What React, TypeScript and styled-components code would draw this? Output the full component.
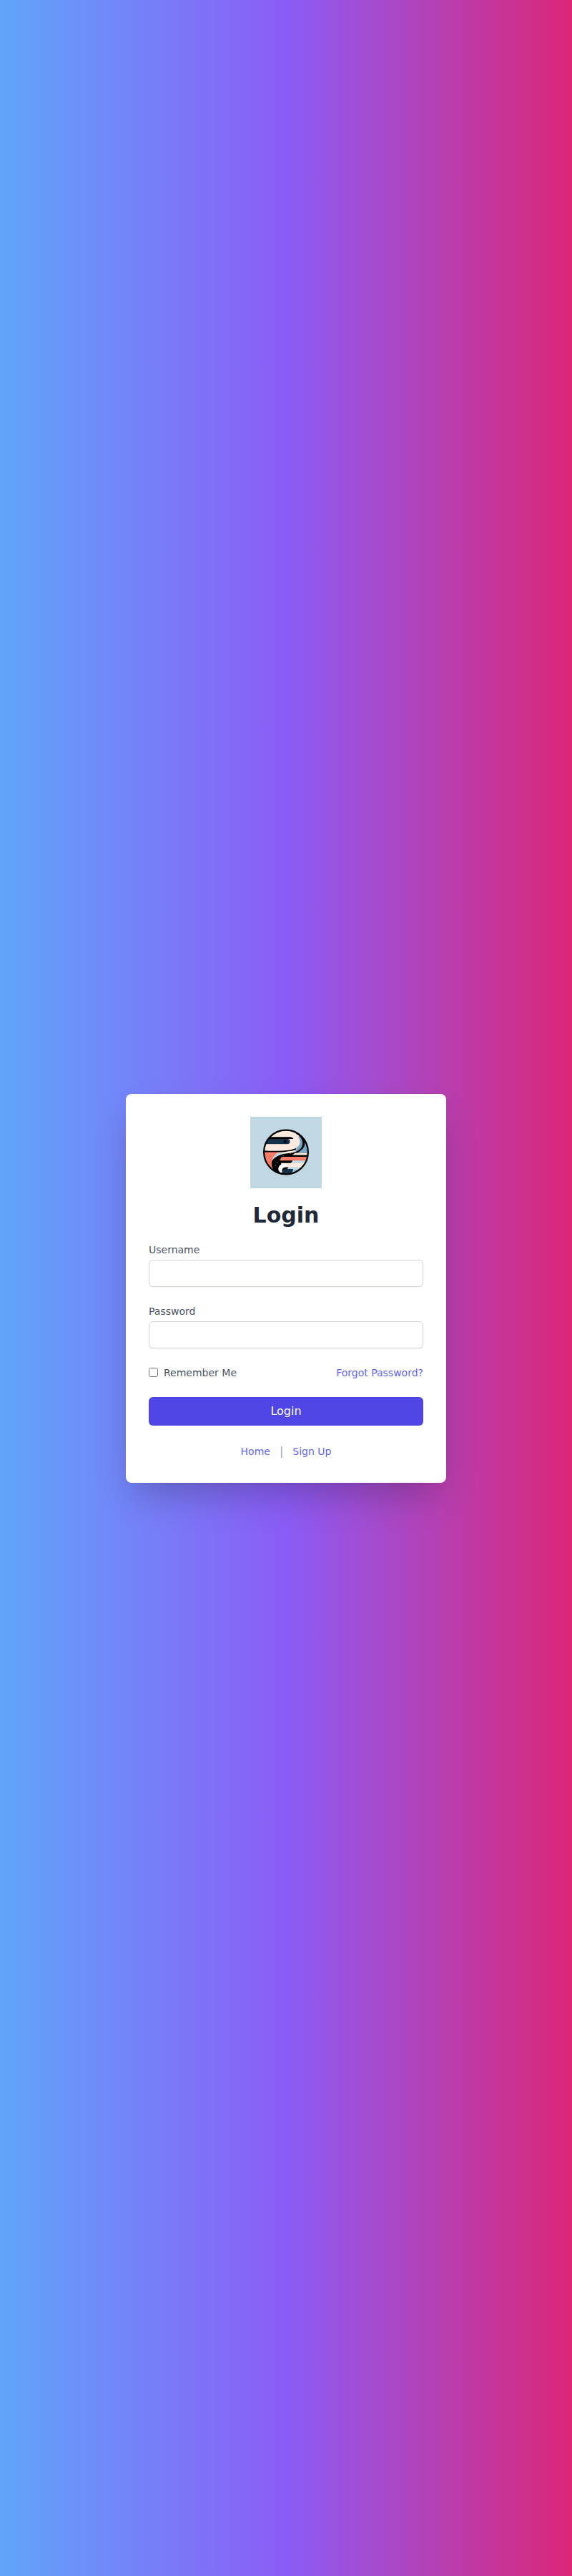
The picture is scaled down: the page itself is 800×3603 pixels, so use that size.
import React from "react";
import styled, { createGlobalStyle } from "styled-components";

const GlobalStyle = createGlobalStyle`
    * {
        box-sizing: border-box;
    }

    body {
        margin: 0;
        font-family: "DejaVu Sans", sans-serif;
    }
`

const Page = styled.div`
    min-height: 100vh;
    display: flex;
    align-items: center;
    justify-content: center;
    background: linear-gradient(to right, #60a5fa, #8b5cf6, #db2777);
`

const Card = styled.div`
    width: 448px;
    padding: 32px;
    background: #fff;
    border-radius: 8px;
    box-shadow: 0 25px 50px -12px rgba(0, 0, 0, 0.25);
`

const LogoWrap = styled.div`
    display: flex;
    justify-content: center;
    margin-bottom: 16px;

    & > svg {
        display: block;
    }
`

const Title = styled.h1`
    margin: 0 0 16px;
    font-size: 30px;
    line-height: 44px;
    font-weight: 700;
    text-align: center;
    color: #1f2937;
`

const Field = styled.div`
    margin-bottom: 24px;
`

const Label = styled.label`
    display: block;
    margin-bottom: 4px;
    font-size: 14px;
    line-height: 20px;
    color: #4b5563;
`

const Input = styled.input`
    display: block;
    width: 100%;
    height: 38px;
    padding: 8px 12px;
    background: #fff;
    border: 1px solid #d1d5db;
    border-radius: 6px;
    box-shadow: 0 1px 2px rgba(0, 0, 0, 0.05);
    font-size: 14px;
    font-family: inherit;
`

const OptionsRow = styled.div`
    display: flex;
    align-items: center;
    justify-content: space-between;
    margin-bottom: 24px;
`

const Remember = styled.label`
    display: flex;
    align-items: center;
    font-size: 14px;
    line-height: 20px;
    color: #4b5563;

    & > input {
        width: 13px;
        height: 13px;
        margin: 0 8px 0 0;
    }
`

const TextLink = styled.a`
    font-size: 14px;
    line-height: 20px;
    color: #6366f1;
    text-decoration: none;
`

const SubmitButton = styled.button`
    display: block;
    width: 100%;
    height: 40px;
    background: #4f46e5;
    color: #fff;
    border: none;
    border-radius: 6px;
    font-size: 16px;
    font-family: inherit;
    cursor: pointer;
`

const FooterLinks = styled.div`
    display: flex;
    justify-content: center;
    align-items: baseline;
    gap: 13px;
    margin-top: 24px;
    line-height: 24px;
`

const Divider = styled.span`
    font-size: 16px;
    line-height: 24px;
    color: #9ca3af;
`

function Logo() {
    return (
        <svg width="100" height="100" viewBox="0 0 100 100" role="img" aria-label="Logo">
            <defs>
                <clipPath id="disc">
                    <circle cx="50" cy="49.5" r="31" />
                </clipPath>
                <filter id="soft">
                    <feGaussianBlur stdDeviation="0.35" />
                </filter>
            </defs>
            <rect width="100" height="100" fill="#c0d8e2" />
            <g clipPath="url(#disc)" filter="url(#soft)">
                {/* upper half: cream with navy bar */}
                <rect x="15" y="15" width="70" height="36" fill="#fdeadf" />
                <path d="M22 28.2H62a1.4 1.4 0 0 1 0 2.8H53v7.4H18V28.2Z" fill="#000" />
                <path d="M18 31H52a3.6 3.6 0 0 1 0 7.2H18Z" fill="#12304a" />
                <circle cx="49" cy="34.5" r="2.4" fill="#05101b" />
                {/* blue swirl on the right */}
                <path d="M68 26C78 32 84 42 84 54H62Z" fill="#75a9c6" />
                {/* black S band */}
                <path d="M64 24C72 27 75 36 72 42C69 48 62 50 54 51C44 52 36 54 30 62C27 67 30 76 36 80L46 82L60 60L84 56V50.5H66C72 47 78 42 76 34C75 29 70 25 64 22Z" fill="#000" />
                {/* cream end of the upper lobe */}
                <path d="M60 22C67 26 71 32 69 38C67 43 62 45 56 46C44 47.5 32 47.5 18 47V38.2H52C58 38 61 36 61 33C61 30 58 28 54 28L60 22Z" fill="#fdeadf" />
                <path d="M18 47.2C32 48 44 48 56 46.5L64 44V46C56 48.5 44 50 30 50H18Z" fill="#000" />
                {/* coral wedge on the left */}
                <path d="M17 49.6H40C35 52 31 57 30 63C29.5 67 30 70 32 73L22 72L16 56Z" fill="#fb7c66" />
                {/* stripes on the right */}
                <path d="M63 50.6H84V53.6H59Z" fill="#fdeadf" />
                <path d="M45.5 56H84V61.2H42C42 58.6 43 56.4 45.5 56Z" fill="#fb7c66" />
                <path d="M43 64.8H84V70.6H47C44.5 70.4 43.4 67.8 43 64.8Z" fill="#fdeadf" />
                {/* white hook */}
                <path d="M50 65C42 65.4 38 70 39.6 75C40.6 77.6 43.4 79 45 78C43.8 74.5 44.6 71 50 70Z" fill="#fff" />
                {/* navy and blue tail */}
                <path d="M45.4 77C45 74 47 73 50 73H60C60 76.5 58 79.4 53 81H47Z" fill="#12304a" />
                <path d="M54 81C58 79 60.5 76.5 62 74.6L72 74L68 82H54Z" fill="#75a9c6" />
                {/* dots */}
                <g fill="#fff">
                    <circle cx="26.5" cy="51.5" r="0.5" />
                    <circle cx="46" cy="54.5" r="0.5" />
                    <circle cx="41" cy="60" r="0.5" />
                    <circle cx="35" cy="68" r="0.5" />
                    <circle cx="37.5" cy="64" r="0.5" />
                    <circle cx="56" cy="51" r="0.5" />
                </g>
                <g fill="#c5303a">
                    <circle cx="27" cy="55" r="0.6" />
                    <circle cx="29" cy="60" r="0.6" />
                    <circle cx="27" cy="64" r="0.7" />
                </g>
            </g>
            <circle cx="50" cy="49.5" r="30.9" fill="none" stroke="#000" strokeWidth="2.2" />
        </svg>
    )
}

function App() {
    return (
        <Page>
            <GlobalStyle />
            <Card>
                <LogoWrap>
                    <Logo />
                </LogoWrap>
                <Title>Login</Title>
                <form onSubmit={e => e.preventDefault()}>
                    <Field>
                        <Label htmlFor="username">Username</Label>
                        <Input id="username" type="text" />
                    </Field>
                    <Field>
                        <Label htmlFor="password">Password</Label>
                        <Input id="password" type="password" />
                    </Field>
                    <OptionsRow>
                        <Remember>
                            <input type="checkbox" />
                            Remember Me
                        </Remember>
                        <TextLink href="#">Forgot Password?</TextLink>
                    </OptionsRow>
                    <SubmitButton type="submit">Login</SubmitButton>
                </form>
                <FooterLinks>
                    <TextLink href="#">Home</TextLink>
                    <Divider>|</Divider>
                    <TextLink href="#">Sign Up</TextLink>
                </FooterLinks>
            </Card>
        </Page>
    )
}

export default App;
